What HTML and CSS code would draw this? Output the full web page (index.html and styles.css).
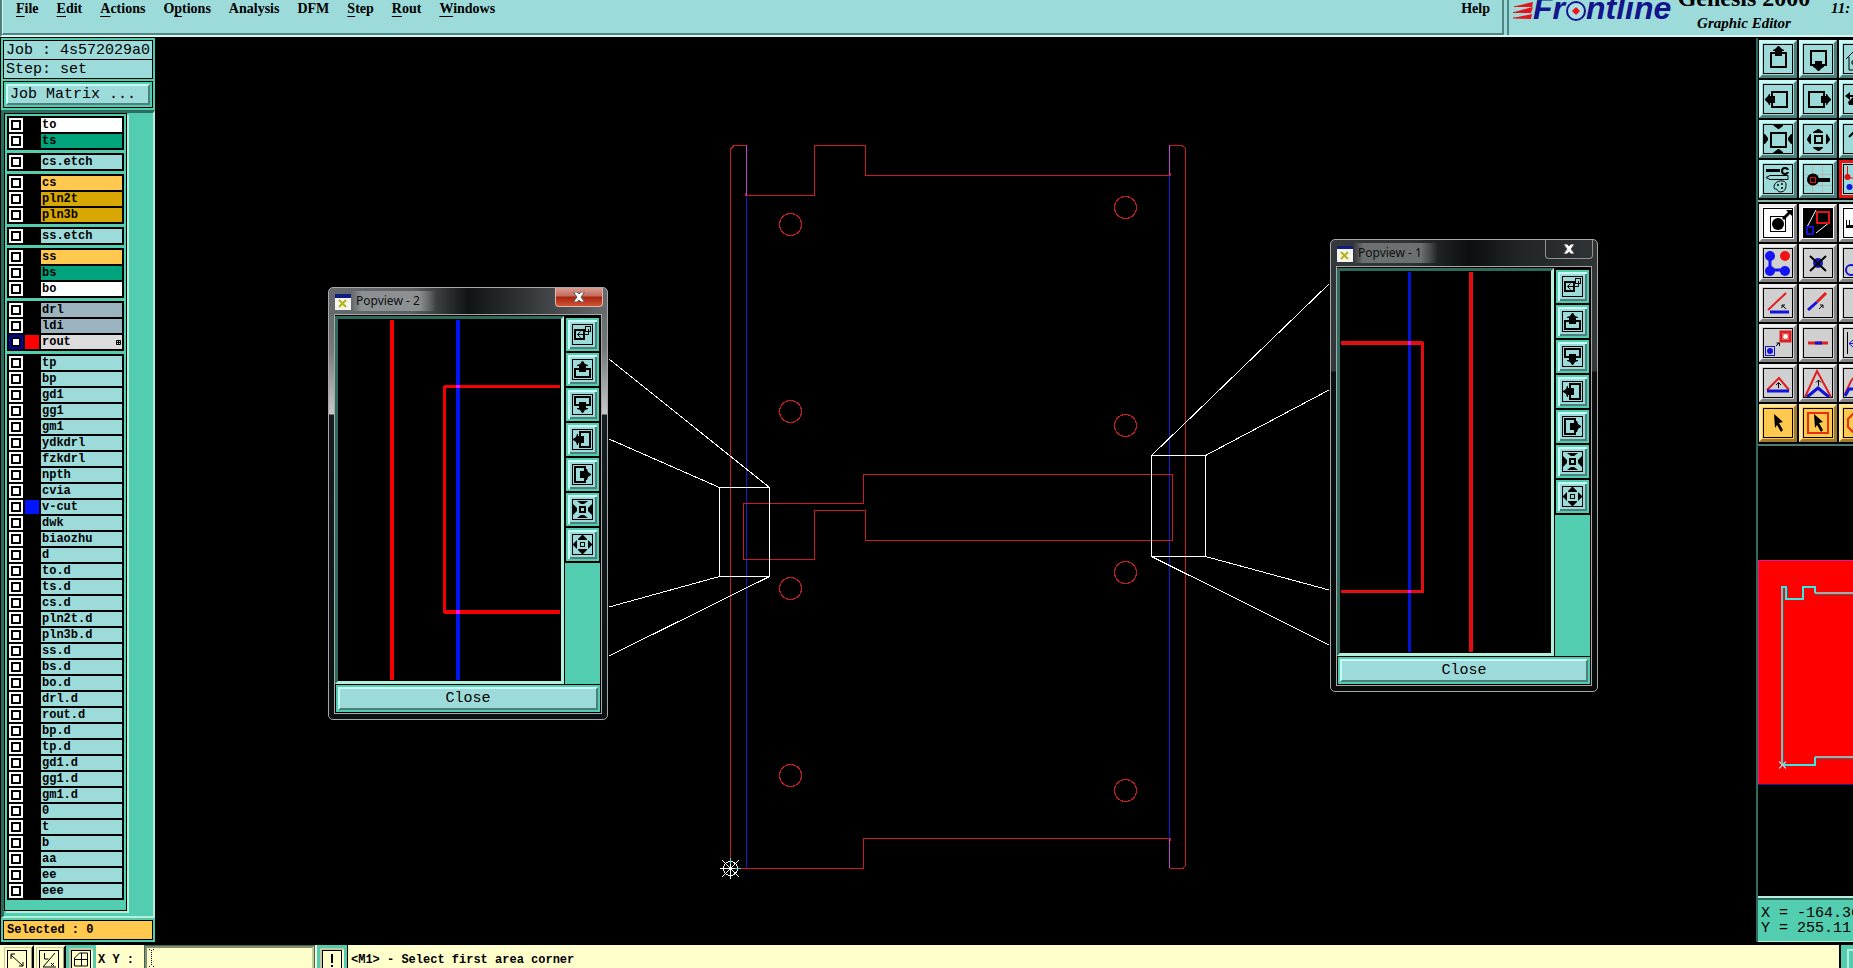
FILE: index.html
```html
<!DOCTYPE html>
<html lang="en">
<head>
<meta charset="utf-8">
<title>Genesis 2000 Graphic Editor</title>
<link rel="stylesheet" href="styles.css">
</head>
<body>
<svg class="defs" aria-hidden="true">
  <!-- small icons of the popview tool columns, 21 x 21 -->
  <symbol id="m-copy" viewBox="0 0 21 21"><rect x=".5" y=".5" width="20" height="20" fill="none" stroke="#000"/><rect x="3" y="6" width="9" height="9" fill="none" stroke="#000" stroke-width="2"/><rect x="13.5" y="2.5" width="5" height="5" fill="none" stroke="#000"/><path d="M16.500 5v5.500H5.500M8.500 7.500l-3 3 3 3" fill="none" stroke="#000"/></symbol>
  <symbol id="m-up" viewBox="0 0 21 21"><rect x=".5" y=".5" width="20" height="20" fill="none" stroke="#000"/><path d="M7 10H3v8h15v-8h-4" fill="none" stroke="#000" stroke-width="2"/><path d="M10 2h1l2 3 3 1v1h-2v6H7V7H5V6l3-1z"/></symbol>
  <symbol id="m-down" viewBox="0 0 21 21"><rect x=".5" y=".5" width="20" height="20" fill="none" stroke="#000"/><path d="M7 11H3V3h15v8h-4" fill="none" stroke="#000" stroke-width="2"/><path d="M10 19h1l2-3 3-1v-1h-2V8H7v6H5v1l3 1z"/></symbol>
  <symbol id="m-left" viewBox="0 0 21 21"><rect x=".5" y=".5" width="20" height="20" fill="none" stroke="#000"/><path d="M8 7V3h10v15H8v-4" fill="none" stroke="#000" stroke-width="2"/><path d="M1 10v1l3 2 1 3h1v-2h6V7H6V5H5L4 8z"/></symbol>
  <symbol id="m-right" viewBox="0 0 21 21"><rect x=".5" y=".5" width="20" height="20" fill="none" stroke="#000"/><path d="M13 7V3H3v15h10v-4" fill="none" stroke="#000" stroke-width="2"/><path d="M19 10v1l-3 2-1 3h-1v-2H8V7h6V5h1l1 3z"/></symbol>
  <symbol id="m-in" viewBox="0 0 21 21"><rect x=".5" y=".5" width="20" height="20" fill="none" stroke="#000"/><rect x="8" y="8" width="5" height="5" fill="none" stroke="#000" stroke-width="2"/><path d="M5 2h11l-4 3h-3zM5 19h11l-4-3h-3zM1 5l4 4v3l-4 4zM20 5l-4 4v3l4 4z"/></symbol>
  <symbol id="m-out" viewBox="0 0 21 21"><rect x=".5" y=".5" width="20" height="20" fill="none" stroke="#000"/><rect x="8.5" y="8.5" width="4" height="4" fill="none" stroke="#000"/><path d="M10 1h1l4 4v1H6V5zM10 20h1l4-4v-1H6v1zM1 10l4-4v9l-4-4zM20 10l-4-4v9l4-4z"/></symbol>
</svg>

<header class="header">
  <nav class="menubar">
    <button><u>F</u>ile</button><button><u>E</u>dit</button><button><u>A</u>ctions</button><button>O<u>p</u>tions</button><button>Analysis</button><button>DFM</button><button><u>S</u>tep</button><button><u>R</u>out</button><button><u>W</u>indows</button><button class="help">Help</button>
  </nav>
  <div class="brand">
    <svg class="logo" width="162" height="34" viewBox="1512 0 162 34" role="img" aria-label="Frontline">
      <path d="M1515 6l17-4-1 5zM1513 12l19-5-2 6zM1512 18l19-4-1 5z" fill="#e8141c"/>
      <path d="M1513 6.500h17M1512 12.500h18M1512 18h18" stroke="#e8141c"/>
      <text x="1532" y="19" class="logo-text">Fr</text>
      <circle cx="1575" cy="11" r="9" fill="#a9dfe6" stroke="#14148c" stroke-width="2"/>
      <path d="M1575 7l4 4-4 4-4-4z" fill="#f01010"/>
      <text x="1585" y="19" class="logo-text">ntline</text>
    </svg>
    <div class="product"><span class="product-name">Genesis 2000</span><span class="product-part">Graphic Editor</span></div>
    <time class="clock">11:</time>
  </div>
</header>

<main class="workspace">
  <aside class="sidebar">
    <div class="job">
      <div class="job-line">Job : 4s572029a0</div>
      <div class="job-line">Step: set</div>
    </div>
    <div class="matrix"><button class="matrix-btn">Job Matrix ...</button></div>
    <div class="layers-pane">
      <div class="layers">
        <div class="group">
          <label class="layer"><input type="checkbox"><i></i><span class="white">to</span></label>
          <label class="layer"><input type="checkbox"><i></i><span class="green">ts</span></label>
        </div>
        <div class="group">
          <label class="layer"><input type="checkbox"><i></i><span>cs.etch</span></label>
        </div>
        <div class="group">
          <label class="layer"><input type="checkbox"><i></i><span class="orange">cs</span></label>
          <label class="layer"><input type="checkbox"><i></i><span class="gold">pln2t</span></label>
          <label class="layer"><input type="checkbox"><i></i><span class="gold">pln3b</span></label>
        </div>
        <div class="group">
          <label class="layer"><input type="checkbox"><i></i><span>ss.etch</span></label>
        </div>
        <div class="group">
          <label class="layer"><input type="checkbox"><i></i><span class="orange">ss</span></label>
          <label class="layer"><input type="checkbox"><i></i><span class="green">bs</span></label>
          <label class="layer"><input type="checkbox"><i></i><span class="white">bo</span></label>
        </div>
        <div class="group">
          <label class="layer"><input type="checkbox"><i></i><span class="slate">drl</span></label>
          <label class="layer"><input type="checkbox"><i></i><span class="slate">ldi</span></label>
          <label class="layer"><input type="checkbox" class="work"><i class="red"></i><span class="silver">rout<svg width="5" height="5" viewBox="0 0 5 5"><path d="M.5 .5h4v4h-4zM2.500 0v5M0 2.500h5" fill="none" stroke="#000"/></svg></span></label>
        </div>
        <div class="group">
          <label class="layer"><input type="checkbox"><i></i><span>tp</span></label>
          <label class="layer"><input type="checkbox"><i></i><span>bp</span></label>
          <label class="layer"><input type="checkbox"><i></i><span>gd1</span></label>
          <label class="layer"><input type="checkbox"><i></i><span>gg1</span></label>
          <label class="layer"><input type="checkbox"><i></i><span>gm1</span></label>
          <label class="layer"><input type="checkbox"><i></i><span>ydkdrl</span></label>
          <label class="layer"><input type="checkbox"><i></i><span>fzkdrl</span></label>
          <label class="layer"><input type="checkbox"><i></i><span>npth</span></label>
          <label class="layer"><input type="checkbox"><i></i><span>cvia</span></label>
          <label class="layer"><input type="checkbox"><i class="blue"></i><span>v-cut</span></label>
          <label class="layer"><input type="checkbox"><i></i><span>dwk</span></label>
          <label class="layer"><input type="checkbox"><i></i><span>biaozhu</span></label>
          <label class="layer"><input type="checkbox"><i></i><span>d</span></label>
          <label class="layer"><input type="checkbox"><i></i><span>to.d</span></label>
          <label class="layer"><input type="checkbox"><i></i><span>ts.d</span></label>
          <label class="layer"><input type="checkbox"><i></i><span>cs.d</span></label>
          <label class="layer"><input type="checkbox"><i></i><span>pln2t.d</span></label>
          <label class="layer"><input type="checkbox"><i></i><span>pln3b.d</span></label>
          <label class="layer"><input type="checkbox"><i></i><span>ss.d</span></label>
          <label class="layer"><input type="checkbox"><i></i><span>bs.d</span></label>
          <label class="layer"><input type="checkbox"><i></i><span>bo.d</span></label>
          <label class="layer"><input type="checkbox"><i></i><span>drl.d</span></label>
          <label class="layer"><input type="checkbox"><i></i><span>rout.d</span></label>
          <label class="layer"><input type="checkbox"><i></i><span>bp.d</span></label>
          <label class="layer"><input type="checkbox"><i></i><span>tp.d</span></label>
          <label class="layer"><input type="checkbox"><i></i><span>gd1.d</span></label>
          <label class="layer"><input type="checkbox"><i></i><span>gg1.d</span></label>
          <label class="layer"><input type="checkbox"><i></i><span>gm1.d</span></label>
          <label class="layer"><input type="checkbox"><i></i><span>0</span></label>
          <label class="layer"><input type="checkbox"><i></i><span>t</span></label>
          <label class="layer"><input type="checkbox"><i></i><span>b</span></label>
          <label class="layer"><input type="checkbox"><i></i><span>aa</span></label>
          <label class="layer"><input type="checkbox"><i></i><span>ee</span></label>
          <label class="layer"><input type="checkbox"><i></i><span>eee</span></label>
        </div>
      </div>
    </div>
    <div class="selected"><div class="selected-box">Selected : 0</div></div>
  </aside>

  <section class="canvas">
    <svg class="board" viewBox="155 37 1601 908" fill="none" shape-rendering="crispEdges">
      <path d="M746.500 195.500V868M1169.500 175.500V838" stroke="#1818d8"/>
      <g stroke="#c81c24">
        <path d="M746.500 145.500H734L730.500 149V868.500H863.500V838.500H1170.500V841"/>
        <path d="M1169.500 868.500H1183L1185.500 865V148.500L1182 145.500H1169.500M1170.500 173V175.500H865.500V145.500H814.500V195.500H745.500V193"/>
        <path d="M743.500 503.500H863.500V474.500H1172.500V540.500H865.500V510.500H814.500V559.500H743.500Z"/>
        <circle cx="790.500" cy="224.500" r="11"/><circle cx="1125.500" cy="207.500" r="11"/>
        <circle cx="790.500" cy="411.500" r="11"/><circle cx="1125.500" cy="425.500" r="11"/>
        <circle cx="790.500" cy="588.500" r="11"/><circle cx="1125.500" cy="572.500" r="11"/>
        <circle cx="790.500" cy="775.500" r="11"/><circle cx="1125.500" cy="790.500" r="11"/>
      </g>
      <path d="M746.500 145V195M1169.500 145V175M1169.500 839V868" stroke="#c044d0"/>
      <g stroke="#fff">
        <path d="M719.500 487.500h50v89h-50zM1151.500 455.500h54v101h-54z"/>
        <path d="M769.500 487.500L609 359M719.500 487.500L609 439M719.500 576.500L609 607M769.500 576.500L609 656"/>
        <path d="M1151.500 455.500L1329 284M1205.500 455.500L1329 390M1205.500 556.500L1329 590M1151.500 556.500L1329 645"/>
        <circle cx="730.500" cy="868.500" r="7"/>
        <path d="M720 868.500h21M730.500 858v21M722 860l17 17M739 860l-17 17"/>
      </g>
      <path d="M730.500 858v6M735 868.500h6" stroke="#3ce0e0"/>
    </svg>

    <section class="popview popview-a">
      <div class="titlebar">
        <svg width="16" height="16" viewBox="0 0 16 16"><path fill="#f4f4f0" d="M0 0h16v16H0z"/><path fill="#101c84" d="M0 0h16v4H0z"/><path d="M4 6l7 7M11 6l-7 7" stroke="#b4b414" stroke-width="2"/></svg>
        <h2>Popview - 2</h2>
        <button class="win-close" aria-label="Close window"><svg width="12" height="10" viewBox="0 0 12 10"><path d="M1 0h3l2 2 2-2h3v1L8 5l3 4v1H8L6 8l-2 2H1V9l3-4-3-4z" fill="#fff" stroke="#555"/></svg></button>
      </div>
      <div class="pop-body">
        <svg class="view" viewBox="338 319 223 362" shape-rendering="crispEdges" preserveAspectRatio="none">
          <path fill="#f40000" d="M390 320h4v360h-4zM443 386h3v227h-3zM444 385h116v3H444zM444 610h116v4H444z"/>
          <path fill="#0014f4" d="M456 320h4v360h-4z"/><path fill="#f014d8" d="M456 385h4v3h-4zM456 610h4v4h-4z"/>
        </svg>
        <div class="pop-tools">
          <button aria-label="Copy view"><svg><use href="#m-copy"/></svg></button>
          <button aria-label="Pan up"><svg><use href="#m-up"/></svg></button>
          <button aria-label="Pan down"><svg><use href="#m-down"/></svg></button>
          <button aria-label="Pan left"><svg><use href="#m-left"/></svg></button>
          <button aria-label="Pan right"><svg><use href="#m-right"/></svg></button>
          <button aria-label="Zoom in"><svg><use href="#m-in"/></svg></button>
          <button aria-label="Zoom out"><svg><use href="#m-out"/></svg></button>
        </div>
        <div class="pop-foot"><button>Close</button></div>
      </div>
    </section>

    <section class="popview popview-b">
      <div class="titlebar">
        <svg width="16" height="16" viewBox="0 0 16 16"><path fill="#f4f4f0" d="M0 0h16v16H0z"/><path fill="#101c84" d="M0 0h16v3H0z"/><path d="M4 6l7 7M11 6l-7 7" stroke="#b4b414" stroke-width="2"/></svg>
        <h2>Popview - 1</h2>
        <button class="win-close" aria-label="Close window"><svg width="12" height="10" viewBox="0 0 12 10"><path d="M1 0h3l2 2 2-2h3v1L8 5l3 4v1H8L6 8l-2 2H1V9l3-4-3-4z" fill="#fff" stroke="#555"/></svg></button>
      </div>
      <div class="pop-body">
        <svg class="view" viewBox="1340 271 211 382" shape-rendering="crispEdges" preserveAspectRatio="none">
          <path fill="#e40c10" d="M1469 272h4v380h-4zM1421 342h3v251h-3zM1341 341h82v4h-82zM1341 590h83v3h-83z"/>
          <path fill="#0014d8" d="M1408 272h3v380h-3z"/><path fill="#e818d8" d="M1408 341h3v4h-3zM1408 590h3v3h-3z"/>
        </svg>
        <div class="pop-tools">
          <button aria-label="Copy view"><svg><use href="#m-copy"/></svg></button>
          <button aria-label="Pan up"><svg><use href="#m-up"/></svg></button>
          <button aria-label="Pan down"><svg><use href="#m-down"/></svg></button>
          <button aria-label="Pan left"><svg><use href="#m-left"/></svg></button>
          <button aria-label="Pan right"><svg><use href="#m-right"/></svg></button>
          <button aria-label="Zoom in"><svg><use href="#m-in"/></svg></button>
          <button aria-label="Zoom out"><svg><use href="#m-out"/></svg></button>
        </div>
        <div class="pop-foot"><button>Close</button></div>
      </div>
    </section>
  </section>

  <aside class="tools">
    <div class="toolgrid">
      <button aria-label="Pan up"><svg viewBox="0 0 32 32"><rect x="9" y="10" width="15" height="14" fill="none" stroke="#000" stroke-width="2"/><path d="M16 3h1l3 3 2 1v1h-2v5h-7V8h-2V7l2-1z"/></svg></button>
      <button aria-label="Pan down"><svg viewBox="0 0 32 32"><rect x="9" y="8" width="15" height="14" fill="none" stroke="#000" stroke-width="2"/><path d="M16 28h1l3-3 2-1v-1h-2v-5h-7v5h-2v1l2 1z"/></svg></button>
      <button aria-label="Home"><svg viewBox="0 0 32 32"><path d="M4 16l9-9 11 9M7 14v13h15V14M10 18h4v3h-4z" fill="none" stroke="#000"/></svg></button>
      <button aria-label="Pan left"><svg viewBox="0 0 32 32"><rect x="10" y="9" width="15" height="15" fill="none" stroke="#000" stroke-width="2"/><path d="M3 16v1l3 3 1 2h1v-2h5v-7H8v-2H7l-1 2z"/></svg></button>
      <button aria-label="Pan right"><svg viewBox="0 0 32 32"><rect x="7" y="9" width="15" height="15" fill="none" stroke="#000" stroke-width="2"/><path d="M29 16v1l-3 3-1 2h-1v-2h-5v-7h5v-2h1l1 2z"/></svg></button>
      <button aria-label="Undo"><svg viewBox="0 0 32 32"><path d="M8 9l-5 4 5 4v-3h3l-5 5 1 3h12v-2h-7l3-5v-3H8z"/></svg></button>
      <button aria-label="Zoom in"><svg viewBox="0 0 32 32"><rect x="9" y="10" width="15" height="14" fill="none" stroke="#000" stroke-width="2"/><path d="M11 2h10v1l-4 3h-1l-4-3zM11 30h10v-1l-4-3h-1l-4 3zM2 11v10h1l3-4v-2l-3-4zM30 11v10h-1l-3-4v-2l3-4z"/></svg></button>
      <button aria-label="Zoom out"><svg viewBox="0 0 32 32"><rect x="13" y="13" width="7" height="7" fill="none" stroke="#000" stroke-width="2"/><path d="M16 6h1l4 3v1H11V9zM16 28h1l4-3v-1H11v1zM5 16l3-5h1v10H8l-3-4zM28 16l-3-5h-1v10h1l3-4z"/></svg></button>
      <button aria-label="Raise"><svg viewBox="0 0 32 32"><path d="M12 9l-5 5M12 8v17M11 9l7 6" fill="none" stroke="#000" stroke-width="2"/></svg></button>
      <button aria-label="Setup"><svg viewBox="0 0 32 32"><path d="M4 6h14v3H4z"/><circle cx="23" cy="8" r="3" fill="none" stroke="#000" stroke-width="2"/><path d="M24 7h4v2h-4z" fill="#9cdbda"/><path d="M4 14.500l4-2h18v4H8zM12 24c0-7 12-8 12-3 0 3 0 8-6 8-3 0-2-3-4-3s-2-1-2-2z" fill="none" stroke="#000"/><circle cx="16" cy="22" r="1"/><circle cx="20" cy="21" r="1"/><circle cx="20" cy="25" r="1"/></svg></button>
      <button aria-label="Snap"><svg viewBox="0 0 32 32"><path d="M10.500 2v28M20.500 2v28M2 11.500h28M2 22.500h28" stroke="#b0b8b8"/><circle cx="11" cy="16.500" r="6"/><path d="M14 15h14v4H14z"/><rect x="8.5" y="14.5" width="5" height="5" fill="none" stroke="#e01010"/></svg></button>
      <button aria-label="Net points" class="marked"><svg viewBox="0 0 32 32"><path d="M5.500 3v12M5 15h10" stroke="#e01010" fill="none"/><circle cx="5.500" cy="14" r="3" fill="#e01010"/><circle cx="7.500" cy="24" r="3" fill="#1414e0"/></svg></button>
    </div>
    <div class="toolgrid gray">
      <button aria-label="Select feature" class="white"><svg viewBox="0 0 32 32"><rect x="8.5" y="9.5" width="15" height="15" fill="none" stroke="#000"/><circle cx="16" cy="17" r="6"/><path d="M20 11l6-6-2-2h6v6l-2-2-6 6z"/></svg></button>
      <button aria-label="Popview" class="white"><svg viewBox="0 0 32 32"><path d="M2 2h28v28H2z"/><path d="M5 20l9-17M14 26l14-11" stroke="#fff"/><rect x="15" y="5" width="12" height="11" fill="none" stroke="#e41414" stroke-width="2"/><rect x="5" y="20" width="6" height="7" fill="none" stroke="#1414d0" stroke-width="2"/></svg></button>
      <button aria-label="Measure" class="white"><svg viewBox="0 0 32 32"><path d="M4 13v8h24v-8h-1v5h-3v-5h-1v5h-3v-5h-1v5h-3v-5h-1v5h-3v-5h-1v5H8v-5H7v5H5v-5z"/></svg></button>
      <button aria-label="Connect points"><svg viewBox="0 0 32 32"><path d="M8 9v14h15" fill="none" stroke="#1414f4" stroke-width="3"/><g fill="#1414f4"><circle cx="8" cy="9" r="5"/><circle cx="8" cy="24" r="5"/><circle cx="23" cy="24" r="5"/></g><circle cx="23" cy="9" r="5" fill="#f01414"/></svg></button>
      <button aria-label="Delete"><svg viewBox="0 0 32 32"><circle cx="16" cy="16" r="5" fill="#1414c8"/><path d="M8 9l16 15M24 9L8 24" stroke="#000" stroke-width="2"/></svg></button>
      <button aria-label="Circle"><svg viewBox="0 0 32 32"><circle cx="9" cy="23" r="5" fill="none" stroke="#1414d0" stroke-width="2"/></svg></button>
      <button aria-label="Move angle"><svg viewBox="0 0 32 32"><path d="M6 23L24 6" stroke="#e02020" stroke-width="2"/><path d="M8 25h19" stroke="#1414d8" stroke-width="3"/><path d="M24 22l-4-4M20 21v-3h3" stroke="#000" fill="none"/></svg></button>
      <button aria-label="Stretch line"><svg viewBox="0 0 32 32"><path d="M15 15l9-9" stroke="#e02020" stroke-width="3"/><path d="M6 23l9-8" stroke="#1414d8" stroke-width="3"/><path d="M17 22l4-4M18 18h3v3" stroke="#000" fill="none"/></svg></button>
      <button aria-label="Blank tool"><svg viewBox="0 0 32 32"></svg></button>
      <button aria-label="Move to point"><svg viewBox="0 0 32 32"><rect x="19" y="5" width="9" height="9" fill="#fff" stroke="#e02020" stroke-width="3"/><circle cx="23.5" cy="9.5" r="3" fill="#fff" stroke="#e02020"/><rect x="3.5" y="19.5" width="9" height="9" fill="none" stroke="#1414d8"/><circle cx="8" cy="24" r="3" fill="#1414d8"/><path d="M14 19l3-3M14.500 16h3v3" stroke="#000" fill="none"/></svg></button>
      <button aria-label="Split line"><svg viewBox="0 0 32 32"><path d="M6 16h20" stroke="#e02020" stroke-width="3"/><path d="M13 16h7" stroke="#1414c8" stroke-width="3"/></svg></button>
      <button aria-label="Dimension"><svg viewBox="0 0 32 32"><path d="M5.500 5v22" stroke="#000"/><path d="M7 16.500h20M11 13l-4 3.500 4 3.500" stroke="#1414d8" fill="none"/></svg></button>
      <button aria-label="Triangle"><svg viewBox="0 0 32 32"><path d="M5 23L17 11l10 12" fill="none" stroke="#e02020" stroke-width="2"/><path d="M5 24h22" stroke="#1414d8" stroke-width="3"/><path d="M16.500 21v-5M14 18l2.500-2.500L19 18" stroke="#000" fill="none"/></svg></button>
      <button aria-label="Peak"><svg viewBox="0 0 32 32"><path d="M3 30L15 4l14 26" fill="none" stroke="#e02020" stroke-width="2"/><path d="M5 30l11-9 11 9" stroke="#1414d8" stroke-width="3" fill="none"/><path d="M16.500 19v-6M14 15.500l2.500-2.500 2.500 2.500" stroke="#000" fill="none"/></svg></button>
      <button aria-label="Slope"><svg viewBox="0 0 32 32"><path d="M3 27l6-13 8-10" fill="none" stroke="#e02020" stroke-width="2"/><path d="M3 29l4-7h20" stroke="#1414d8" stroke-width="3" fill="none"/></svg></button>
      <button aria-label="Select single" class="orange"><svg viewBox="0 0 32 32"><path d="M12 7l9 8-4 1 4 7-2 2-4-7-2 3z"/></svg></button>
      <button aria-label="Select in frame" class="orange"><svg viewBox="0 0 32 32"><rect x="6" y="6" width="20" height="20" fill="none" stroke="#e83010" stroke-width="2"/><path d="M12 7l9 8-4 1 4 7-2 2-4-7-2 3z"/></svg></button>
      <button aria-label="Select in polygon" class="orange"><svg viewBox="0 0 32 32"><path d="M6 12l6-6h10l5 5v9l-5 6H12l-6-6z" fill="none" stroke="#e83010" stroke-width="2"/></svg></button>
    </div>
    <svg class="overview" viewBox="1758 446 95 451" preserveAspectRatio="xMinYMid slice" fill="none" shape-rendering="crispEdges">
      <path fill="#fe0000" d="M1758 560h95v224h-95z"/>
      <path d="M1758 560.500h95M1758.500 560v224" stroke="#e0148c"/><path d="M1758 784.500h95" stroke="#1c1c90"/>
      <path d="M1783 588V765M1787 588V598M1815 594H1853M1815 758H1853" stroke="#585858" stroke-width="2"/>
      <path d="M1782 587V765M1786 588V598M1815 593H1853M1815 757H1853" stroke="#a8a8a8" stroke-width="2"/>
      <path d="M1781 587H1786V599H1803V587H1815V593M1782 765H1815V757" stroke="#38e8e8" stroke-width="2"/>
      <path d="M1779 762l7 7M1786 762l-7 7" stroke="#a8c8c8"/>
    </svg>
    <div class="readout"><div>X = -164.36</div><div>Y = 255.11</div></div>
  </aside>
</main>

<footer class="statusbar">
  <button class="sb-btn" aria-label="Distance"><svg viewBox="0 0 20 20"><rect x=".5" y=".5" width="19" height="19" fill="none" stroke="#000"/><path d="M4 5l12 11M4 9V4h4M16 12v4h-4" fill="none" stroke="#000"/></svg></button>
  <button class="sb-btn" aria-label="Angle"><svg viewBox="0 0 20 20"><rect x=".5" y=".5" width="19" height="19" fill="none" stroke="#000"/><path d="M5.500 3v6h4M16 3L4 17h13M12 13l3 3M15 13l-3 3" fill="none" stroke="#000"/></svg></button>
  <button class="sb-btn on" aria-label="Grid"><svg viewBox="0 0 20 20"><rect x=".5" y=".5" width="19" height="19" fill="none" stroke="#000"/><path d="M3.500 8l5-5h8v13h-13zM10.500 3v13M3 9.500h13" fill="none" stroke="#000"/></svg></button>
  <label class="xy-label" for="xy">X Y :</label>
  <div class="xy-field"><input class="xy" id="xy" type="text"><svg class="caret" width="5" height="18" viewBox="0 0 5 18"><path d="M2.500 1v16" stroke="#000" stroke-dasharray="1 1"/><path d="M0 .5h1M4 .5h1M0 17.500h1M4 17.500h1" stroke="#000"/></svg></div>
  <button class="sb-btn on" aria-label="Message"><svg viewBox="0 0 20 20"><rect x=".5" y=".5" width="19" height="19" fill="none" stroke="#000"/><path d="M9 4h2v9H9zM9 15h2v2H9z"/></svg></button>
  <p class="message">&lt;M1&gt; - Select first area corner</p>
  <div class="grip"></div>
</footer>
</body>
</html>
```
FILE: styles.css
```css
:root {
  --panel: #9cdbda;
  --teal: #53cdaf;
  --teal-light: #b4f0de;
  --teal-dark: #2f6b5d;
  --cream: #ffffcc;
  --orange: #ffc84e;
  --mono: "Liberation Mono", monospace;
  --serif: "Liberation Serif", serif;
}

* { box-sizing: border-box; }

body {
  margin: 0;
  height: 100vh;
  display: flex;
  flex-direction: column;
  overflow: hidden;
  background: #000;
  color: #000;
  font-family: var(--mono);
}

button {
  margin: 0;
  padding: 0;
  border: 0;
  background: none;
  color: inherit;
  font: inherit;
}

.defs { display: none; }

/* Header */
.header {
  flex: none;
  display: flex;
  height: 37px;
  border-bottom: 2px solid #d9f7f5;
  border-left: 2px solid #4f7f7d;
  background: var(--panel);
  overflow: hidden;
}

.menubar {
  flex: 1;
  display: flex;
  align-items: flex-start;
  gap: 18px;
  padding: 0 12px 0 13px;
  border-left: 1px solid #d9f7f5;
  border-right: 2px solid #4f8583;
  border-bottom: 2px solid #4f8583;
  font: bold 14px/17px var(--serif);
}

.menubar u { text-underline-offset: 3px; }
.help { margin-left: auto; }

.brand {
  display: flex;
  width: 346px;
  margin-left: 3px;
  padding-left: 4px;
  border-left: 2px solid #4f8583;
  overflow: hidden;
}

.logo { flex: none; }
.logo-text { font: italic bold 32px "Liberation Sans", sans-serif; fill: #14148c; }

.product {
  flex: none;
  display: flex;
  flex-direction: column;
  align-items: center;
  width: 138px;
  margin-top: -16px;
  white-space: nowrap;
}

.product-name { font: bold 24px/28px var(--serif); }
.product-part { font: italic bold 15px/22px var(--serif); }
.clock { margin-left: 18px; font: italic bold 15px/16px var(--serif); }

/* Work area */
.workspace { flex: 1; display: flex; min-height: 0; }

.sidebar {
  flex: none;
  display: flex;
  flex-direction: column;
  width: 154px;
  margin: 1px 0 3px 1px;
  background: var(--teal);
}

.job { margin: 2px 2px 0; border: 1px solid #000; background: var(--panel); }

.job-line {
  height: 18px;
  padding-left: 2px;
  font-size: 15px;
  line-height: 19px;
  white-space: nowrap;
}

.job-line + .job-line { height: 19px; border-top: 1px solid #000; }

.matrix { margin: 2px; padding: 2px; border: 1px solid #000; }

.matrix-btn {
  display: block;
  width: 100%;
  height: 21px;
  padding-left: 2px;
  border: 2px solid;
  border-color: #c8fbf8 #4d7f7d #4d7f7d #c8fbf8;
  background: var(--panel);
  font-size: 15px;
  line-height: 17px;
  text-align: left;
}

.layers-pane {
  flex: 1;
  min-height: 0;
  padding-right: 26px;
  border: solid;
  border-width: 3px 2px 2px 3px;
  border-color: var(--teal-dark) var(--teal-light) var(--teal-light) var(--teal-dark);
}

.layers {
  height: 798px;
  display: flex;
  flex-direction: column;
  gap: 3px;
  padding: 2px;
  border: 1px solid #000;
  box-shadow: 2px 2px 0 var(--teal-light);
}

.group {
  display: flex;
  flex-direction: column;
  gap: 2px;
  padding: 2px;
  background: #000;
}

.layer { display: flex; gap: 2px; height: 14px; }

.layer input {
  appearance: none;
  flex: none;
  width: 14px;
  height: 14px;
  margin: 0;
  border: 2px solid #fff;
  background: #fff;
  box-shadow: inset 0 0 0 2px #000;
}

.layer .work { border-color: #0000b4; }
.layer i { flex: none; width: 14px; }
.layer .red { background: #f00; }
.layer .blue { background: #0014ff; }

.layer span {
  flex: 1;
  display: flex;
  justify-content: space-between;
  align-items: center;
  padding: 0 1px;
  background: var(--panel);
  font-size: 12px;
  font-weight: bold;
  line-height: 14px;
}

.layer .white { background: #fff; }
.layer .green { background: #00a47c; }
.layer .orange { background: var(--orange); }
.layer .gold { background: #d8a800; }
.layer .slate { background: #9cb4bf; }
.layer .silver { background: #dcdcdc; }

.selected { padding: 2px; }

.selected-box {
  height: 20px;
  padding-left: 3px;
  border: 1px solid #000;
  background: var(--orange);
  font-size: 12px;
  font-weight: bold;
  line-height: 18px;
}

/* Drawing area */
.canvas { position: relative; flex: 1; min-width: 0; background: #000; }
.board { display: block; width: 100%; height: 100%; }

.popview {
  position: absolute;
  display: flex;
  flex-direction: column;
  padding: 0 5px 5px;
  border: 1px solid #a4a8a8;
  border-radius: 5px;
}

.popview-a {
  left: 173px;
  top: 250px;
  width: 280px;
  height: 433px;
  background:
    linear-gradient(90deg, #666a6c 0, #5c6062 30%, #101414 50%, #282c2e 65%, #686c6e 100%) 0 0 / 100% 26px no-repeat,
    linear-gradient(#606466, #74787a 60px, #c8c8ca 126px, #141c20 127px, #0c1214);
}

.popview-b {
  left: 1175px;
  top: 202px;
  width: 268px;
  height: 453px;
  background:
    linear-gradient(90deg, #34383a 0, #303436 30%, #0c0e10 52%, #202426 70%, #303436 100%) 0 0 / 100% 26px no-repeat,
    linear-gradient(#303436, #34383a 131px, #0c0e10 132px, #080a0a);
}

.titlebar { display: flex; align-items: center; height: 26px; }
.titlebar > svg { flex: none; margin: 2px 0 0 1px; }

.titlebar h2 {
  margin: 0;
  padding: 0 16px 0 5px;
  background: linear-gradient(90deg, transparent, #8c9092 12%, #8c9092 80%, transparent);
  color: #101010;
  font: 12px/20px "Noto Sans", sans-serif;
}

.popview-b h2 { background: linear-gradient(90deg, transparent, #6c7072 12%, #6c7072 80%, transparent); }

.win-close {
  align-self: flex-start;
  display: flex;
  align-items: center;
  justify-content: center;
  width: 48px;
  height: 19px;
  margin: 0 -1px 0 auto;
  border: 1px solid #909494;
  border-top: 0;
  border-radius: 0 0 4px 4px;
}

.popview-a .win-close {
  border-color: #e0b4ac;
  background: linear-gradient(#d89c90, #c46c5c 8px, #a82410 9px, #d05434);
}

.pop-body {
  flex: 1;
  display: grid;
  grid-template-columns: 1fr 36px;
  grid-template-rows: 1fr 29px;
  min-height: 0;
  border: 1px solid #a4a8a8;
  padding: 1px 1px 0 0;
  background: #000;
}

.view {
  width: 100%;
  height: 100%;
  border: 3px solid;
  border-color: var(--teal-dark) var(--teal-light) var(--teal-light) var(--teal-dark);
}

.pop-tools {
  display: flex;
  flex-direction: column;
  gap: 2px;
  margin-left: 1px;
  padding: 2px 1px 0;
  background: linear-gradient(#000 247px, var(--teal) 247px);
}

.pop-tools button {
  width: 33px;
  height: 33px;
  padding: 1px;
  border: 2px solid var(--teal);
  background: var(--panel);
  box-shadow: inset 2px 2px 0 #c8fbf8, inset -2px -2px 0 #4d7f7d;
}

.pop-tools svg { display: block; width: 21px; height: 21px; margin: 3px; }

.pop-foot { grid-column: 1 / 3; margin: 1px 0 1px 1px; padding: 2px; background: var(--teal); }

.pop-foot button {
  width: 100%;
  height: 23px;
  border: 2px solid;
  border-color: #c8fbf8 #4d7f7d #4d7f7d #c8fbf8;
  background: var(--panel);
  font-size: 15px;
  line-height: 20px;
}

/* Right tool panel */
.tools {
  flex: none;
  display: flex;
  flex-direction: column;
  width: 97px;
  margin: 1px 0 3px;
  border-left: 2px solid var(--teal-dark);
  overflow: hidden;
}

.toolgrid {
  flex: none;
  display: grid;
  grid-template-columns: repeat(3, 38px);
  gap: 2px;
  padding: 2px 0 2px 1px;
  width: 119px;
}

.toolgrid.gray { border-top: 2px solid #8cb8ac; border-bottom: 2px solid #4c7c70; }

.toolgrid button {
  height: 38px;
  border: 3px solid;
  border-color: #c8fbf8 #4d7f7d #4d7f7d #c8fbf8;
  background: var(--panel);
}

.toolgrid.gray button { border-color: #f0f0f0 #848484 #848484 #f0f0f0; background: #d0d0d0; }
.toolgrid.gray .white { background: #fff; }
.toolgrid.gray .orange { border-color: #ffe8a0 #a07c30 #a07c30 #ffe8a0; background: var(--orange); }
.toolgrid .marked { border-color: #e81414; }

.toolgrid svg {
  display: block;
  width: 32px;
  height: 32px;
  outline: 1px solid #000;
  outline-offset: -2px;
}

.overview { flex: 1; min-height: 0; width: 100%; }

.readout {
  flex: none;
  height: 46px;
  padding: 8px 0 0 3px;
  border-top: 2px solid var(--teal-light);
  border-bottom: 1px solid var(--teal-light);
  background: var(--teal);
  box-shadow: inset 0 2px 0 var(--teal-dark);
  font-size: 15px;
  line-height: 15px;
  white-space: nowrap;
}

/* Status bar */
.statusbar {
  flex: none;
  display: flex;
  height: 23px;
  padding-left: 2px;
  background: var(--cream);
  overflow: hidden;
}

.sb-btn {
  flex: none;
  width: 32px;
  height: 30px;
  padding: 3px;
  border: 2px solid var(--cream);
  border-right: 2px solid #000;
  background: var(--cream);
  box-shadow: inset 1px 1px 0 #c8c8a0, inset -1px 0 0 #a0a07c;
}

.sb-btn.on { width: 30px; padding: 2px; border: 3px solid var(--teal); box-shadow: inset 2px 2px 0 #c8c8a0; }
.sb-btn svg { display: block; width: 20px; height: 20px; }

.xy-label {
  width: 48px;
  padding-left: 2px;
  font-size: 12px;
  font-weight: bold;
  line-height: 31px;
}

.xy-field { position: relative; margin: 1px 3px 0 1px; }

.xy {
  display: block;
  width: 169px;
  height: 30px;
  padding: 0 4px;
  border: 2px solid #8c8c6c;
  border-right-color: #c8c8a0;
  border-radius: 0;
  outline: 1px solid #2f6b5d;
  background: var(--cream);
  font: 12px var(--mono);
}

.caret { position: absolute; left: 4px; top: 3px; }

.message {
  flex: 1;
  margin: 0;
  padding-left: 3px;
  border-left: 1px solid #000;
  font-size: 12px;
  font-weight: bold;
  line-height: 31px;
}

.grip {
  width: 14px;
  border-left: 2px solid #000;
  background: var(--teal);
  box-shadow: inset 6px 4px 0 var(--teal), inset 8px 6px 0 var(--teal-light);
}
```
